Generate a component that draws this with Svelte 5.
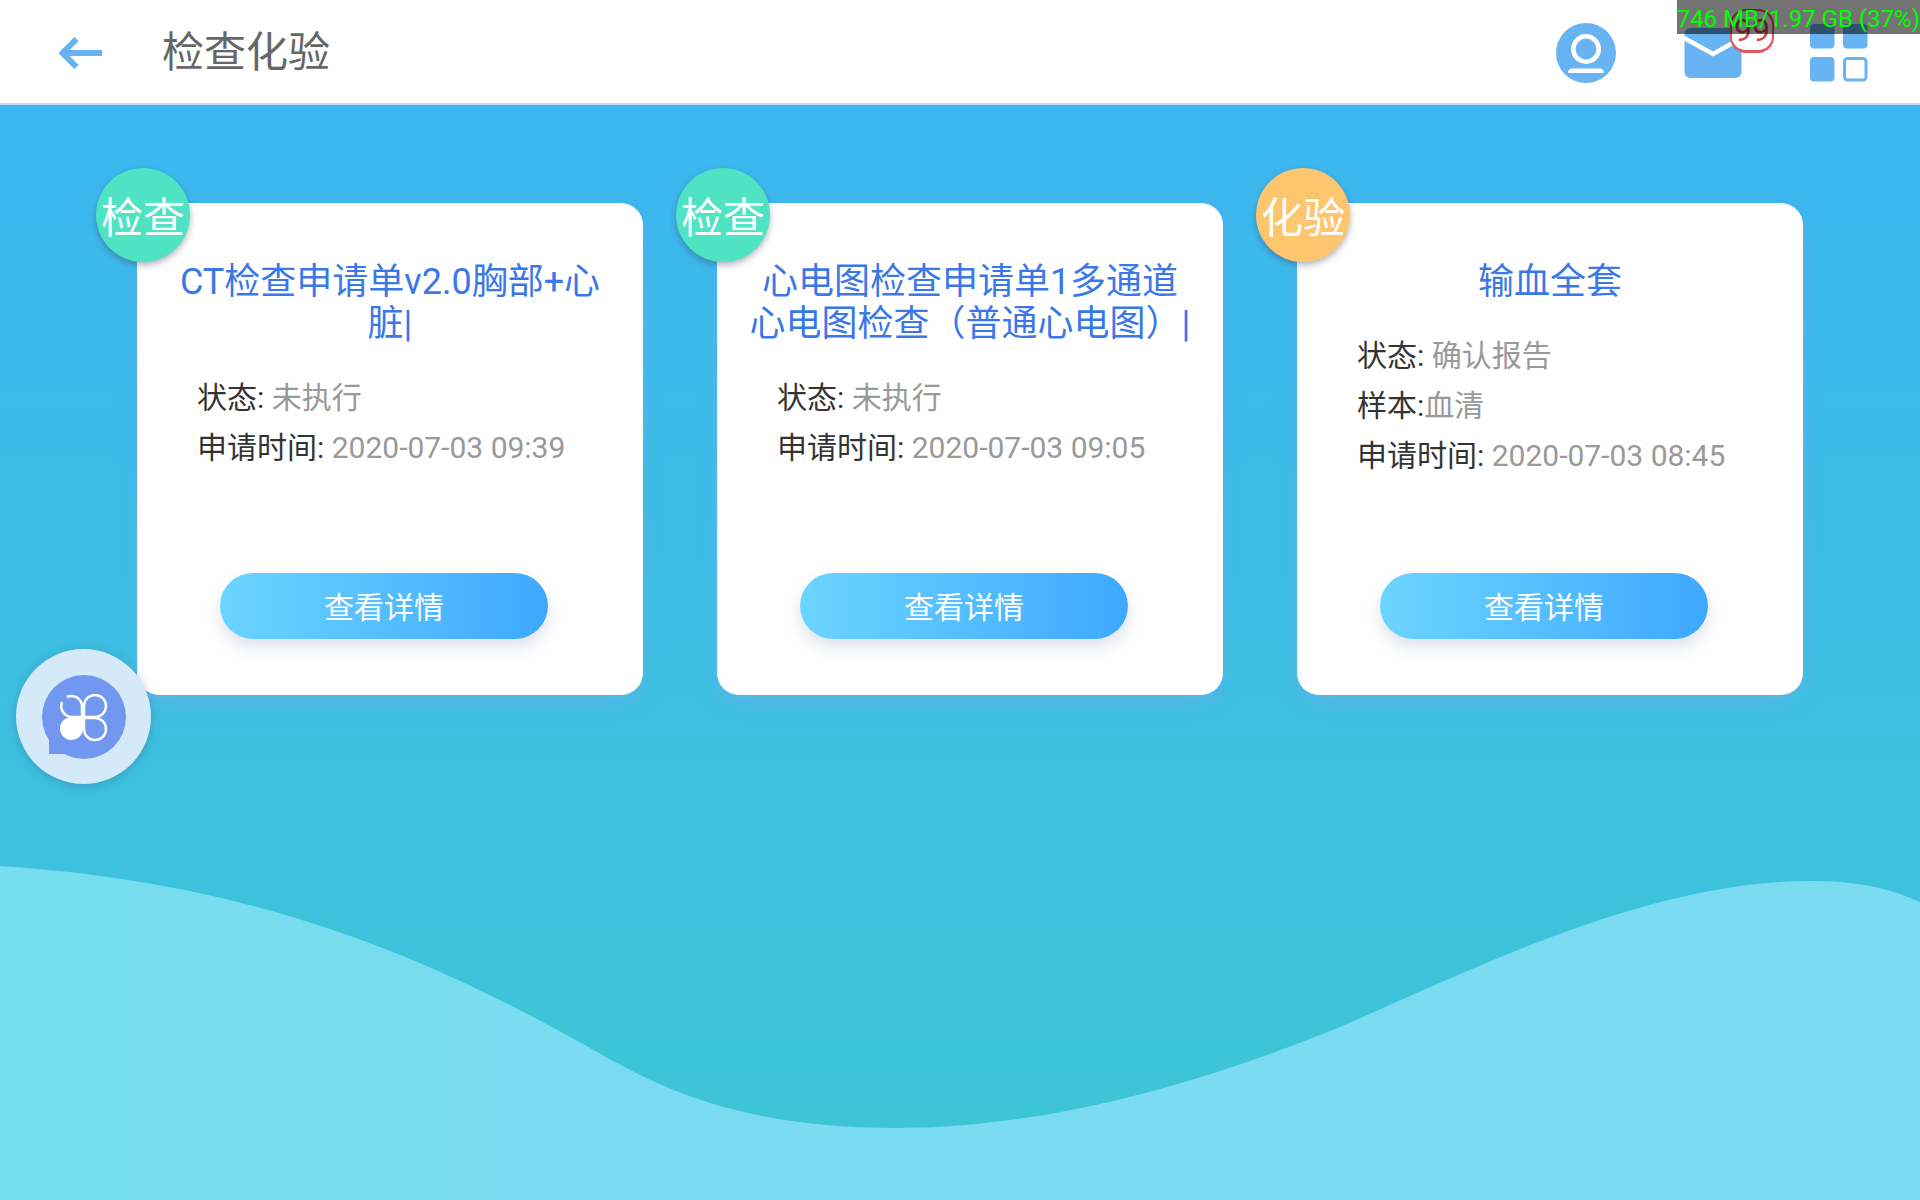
<script>
  const orders = [
    {
      kind: '检查',
      tone: 'exam',
      title: 'CT检查申请单v2.0胸部+心脏|',
      rows: [
        ['状态: ', '未执行'],
        ['申请时间: ', '2020-07-03 09:39']
      ]
    },
    {
      kind: '检查',
      tone: 'exam',
      title: '心电图检查申请单1多通道心电图检查（普通心电图）|',
      rows: [
        ['状态: ', '未执行'],
        ['申请时间: ', '2020-07-03 09:05']
      ]
    },
    {
      kind: '化验',
      tone: 'lab',
      title: '输血全套',
      rows: [
        ['状态: ', '确认报告'],
        ['样本:', '血清'],
        ['申请时间: ', '2020-07-03 08:45']
      ]
    }
  ];
</script>

<div class="page">
  <header>
    <button class="icon" aria-label="返回">
      <svg width="44" height="34" viewBox="0 0 44 34">
        <path d="M43 17H4M17.5 3 3.5 17l14 14" fill="none" stroke="#68b2f2" stroke-width="6" />
      </svg>
    </button>
    <h1>检查化验</h1>
    <nav>
      <button class="icon" aria-label="账户">
        <svg width="60" height="60" viewBox="0 0 60 60">
          <circle cx="30" cy="30" r="30" fill="#68b4f2" />
          <circle cx="30" cy="26" r="12.700" fill="none" stroke="#fff" stroke-width="4.600" />
          <path d="M12 50q0-4.500 4.500-4.500h27q4.500 0 4.500 4.500z" fill="#fff" />
        </svg>
      </button>
      <button class="icon mail" aria-label="消息">
        <svg width="58" height="60" viewBox="0 0 58 60">
          <rect x="0.500" y="5" width="57" height="50" rx="6" fill="#68b4f2" />
          <path d="M0 15 29 31 58 15" fill="none" stroke="#fff" stroke-width="4.500" />
        </svg>
        <span class="count">99</span>
      </button>
      <button class="icon" aria-label="菜单">
        <svg width="58" height="58" viewBox="0 0 58 58" fill="#68b4f2">
          <rect width="24.500" height="24.500" rx="4" />
          <rect x="33" width="24.500" height="24.500" rx="4" />
          <rect y="33" width="24.500" height="24.500" rx="4" />
          <rect x="34.500" y="34.500" width="21.500" height="21.500" rx="3" fill="#fff" stroke="#68b4f2" stroke-width="3" />
        </svg>
      </button>
    </nav>
  </header>

  <main>
    <svg class="wave" viewBox="0 0 1920 336" preserveAspectRatio="none" aria-hidden="true">
      <defs>
        <linearGradient id="waveFill">
          <stop offset="0" stop-color="#76deee" />
          <stop offset="0.400" stop-color="#7bdbf1" />
          <stop offset="1" stop-color="#7bdbf1" />
        </linearGradient>
      </defs>
      <path
        d="M0 2C240 18 410 82 590 184C650 218 730 264 896 264C1040 264 1190 224 1340 163C1480 102 1650 17 1810 17C1850 17 1885 22 1920 38V336H0Z"
        fill="url(#waveFill)"
      />
    </svg>

    <section class="cards">
      {#each orders as order}
        <article>
          <span class="badge {order.tone}">{order.kind}</span>
          <h2>{order.title}</h2>
          <dl>
            {#each order.rows as [label, value]}
              <div><dt>{label}</dt><dd>{value}</dd></div>
            {/each}
          </dl>
          <button class="detail">查看详情</button>
        </article>
      {/each}
    </section>
  </main>

  <button class="fab" aria-label="快捷菜单">
    <svg width="86" height="86" viewBox="0 0 86 86">
      <path d="M8 80V60h20v20z" fill="#7197f1" />
      <circle cx="43" cy="43" r="42" fill="#7197f1" />
      <g fill="none" stroke="#fff" stroke-width="2.500">
        <path d="M43 43V32a11 11 0 1 1 11 11z" />
        <path d="M43 44v11a11 11 0 1 0 11-11z" />
        <path d="M41 43V32a10.500 10.500 0 0 0-15-9M21 28a11 11 0 0 0 9 15h11" />
      </g>
      <path d="M42 43v12a11.500 11.500 0 1 1-11-12z" fill="#fff" />
    </svg>
  </button>

  <output class="memory">746 MB/1.97 GB (37%)</output>
</div>

<style>
  :global(body) {
    font-family: Roboto, 'Noto Sans CJK SC', sans-serif;
  }

  .page {
    position: relative;
    display: flex;
    flex-direction: column;
    min-height: 100vh;
  }

  header {
    display: flex;
    align-items: center;
    box-sizing: border-box;
    height: 105px;
    padding: 2px 52px 0 59px;
    background: #fff;
    border-bottom: 2px solid #c4dcf2;
  }

  button {
    padding: 0;
    border: 0;
    background: none;
    font: inherit;
    cursor: pointer;
  }

  .icon {
    display: flex;
  }

  h1 {
    margin: 0 0 0 59px;
    color: #666;
    font-size: 42px;
    font-weight: 400;
    line-height: 48px;
  }

  nav {
    display: flex;
    align-items: center;
    gap: 68px;
    margin-left: auto;
  }

  .mail {
    position: relative;
  }

  .count {
    position: absolute;
    top: -14px;
    left: 46px;
    box-sizing: border-box;
    width: 44px;
    height: 44px;
    border: 2px solid #e35561;
    border-bottom-width: 3px;
    border-radius: 16px;
    background: #fff;
    color: #d9434f;
    font-size: 32px;
    line-height: 38px;
    text-align: center;
  }

  main {
    position: relative;
    flex: 1;
    background: linear-gradient(#3cb6f0, #3dc5d6 92%);
  }

  .wave {
    position: absolute;
    bottom: 0;
    left: 0;
    width: 100%;
    height: 336px;
  }

  .cards {
    position: relative;
    display: grid;
    grid-template-columns: repeat(3, 1fr);
    gap: 74px;
    padding: 98px 117px 60px 137px;
  }

  article {
    position: relative;
    display: flex;
    flex-direction: column;
    box-sizing: border-box;
    min-height: 492px;
    padding: 58px 32px 56px;
    border-radius: 22px;
    background: #fff;
    box-shadow: 0 10px 18px -4px rgba(130, 170, 245, 0.5);
  }

  .badge {
    position: absolute;
    top: -35px;
    left: -41px;
    width: 94px;
    height: 94px;
    border-radius: 50%;
    box-shadow: 0 3px 6px rgba(60, 60, 90, 0.4);
    color: #fff;
    font-size: 42px;
    line-height: 102px;
    text-align: center;
  }

  .exam {
    background: #4fe3c3;
  }

  .lab {
    background: #fec56f;
  }

  h2 {
    margin: 0;
    color: #3a78e8;
    font-size: 36px;
    font-weight: 400;
    line-height: 42px;
    text-align: center;
  }

  dl {
    margin: 28px 0 24px;
    padding-left: 28px;
    font-size: 30px;
    line-height: 50px;
  }

  dl div {
    display: flex;
    white-space: pre;
  }

  dt {
    color: #333;
  }

  dd {
    margin: 0;
    color: #999;
  }

  .detail {
    width: 328px;
    height: 66px;
    margin: auto auto 0 51px;
    border-radius: 33px;
    background: linear-gradient(90deg, #6cd4ff, #3ea8ff);
    box-shadow: 0 8px 16px rgba(90, 110, 160, 0.2);
    color: #fff;
    font-size: 30px;
    line-height: 66px;
    padding-top: 2px;
  }

  .fab {
    position: absolute;
    top: 649px;
    left: 16px;
    display: flex;
    align-items: center;
    justify-content: center;
    width: 135px;
    height: 135px;
    border-radius: 50%;
    background: #d4eaf8;
    box-shadow: 0 2px 10px rgba(60, 90, 140, 0.35);
  }

  .memory {
    position: absolute;
    top: 0;
    right: 0;
    height: 32px;
    padding-top: 2px;
    background: rgba(0, 0, 0, 0.55);
    color: #0f0;
    font-size: 24px;
    line-height: 34px;
    white-space: nowrap;
  }
</style>
